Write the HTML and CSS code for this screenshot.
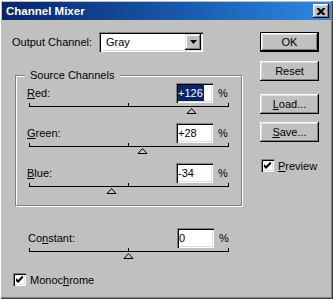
FILE: index.html
```
<!DOCTYPE html>
<html lang="en">
<head>
    <meta charset="UTF-8">
    <title>Channel Mixer</title>
    <link rel="stylesheet" href="styles.css">
</head>
<body>

    <div class="window">

        <!-- Title bar -->
        <div class="titlebar">
            <span class="title">Channel Mixer</span>
            <span class="close-btn">
                <svg width="8" height="7" viewBox="0 0 8 7">
                    <path d="M0 0h2l2 2 2-2h2v1l-2.5 2.5L8 6v1H6L4 5 2 7H0V6l2.5-2.5L0 1z" fill="#000"/>
                </svg>
            </span>
        </div>

        <div class="dialog">

            <!-- Left column -->
            <div class="left-col">
                <div class="output-row">
                    <span class="output-label">Output Channel:</span>
                    <div class="select">
                        <span class="select-value">Gray</span>
                        <span class="select-arrow">
                            <svg width="7" height="4" viewBox="0 0 7 4"><path d="M0 0h7L3.5 4z" fill="#000"/></svg>
                        </span>
                    </div>
                </div>

                <div class="group">
                    <div class="group-legend">Source Channels</div>

                    <div class="channel">
                        <div class="channel-head">
                            <span class="channel-label"><u>R</u>ed:</span>
                            <div class="field"><span class="selected">+126</span></div>
                            <span class="pct">%</span>
                        </div>
                        <svg class="slider" width="201" height="20" viewBox="0 0 201 20">
                            <rect x="0" y="3" width="200" height="1" fill="#000"/>
                            <rect x="0" y="0" width="1" height="4" fill="#000"/>
                            <rect x="99" y="0" width="1" height="4" fill="#000"/>
                            <rect x="199" y="0" width="1" height="4" fill="#000"/>
                            <polygon points="162.5,5.5 158,10.5 167,10.5" fill="#c0c0c0" stroke="#000"/>
                        </svg>
                    </div>

                    <div class="channel">
                        <div class="channel-head">
                            <span class="channel-label"><u>G</u>reen:</span>
                            <div class="field">+28</div>
                            <span class="pct">%</span>
                        </div>
                        <svg class="slider" width="201" height="20" viewBox="0 0 201 20">
                            <rect x="0" y="3" width="200" height="1" fill="#000"/>
                            <rect x="0" y="0" width="1" height="4" fill="#000"/>
                            <rect x="99" y="0" width="1" height="4" fill="#000"/>
                            <rect x="199" y="0" width="1" height="4" fill="#000"/>
                            <polygon points="113.5,5.5 109,10.5 118,10.5" fill="#c0c0c0" stroke="#000"/>
                        </svg>
                    </div>

                    <div class="channel">
                        <div class="channel-head">
                            <span class="channel-label"><u>B</u>lue:</span>
                            <div class="field">-34</div>
                            <span class="pct">%</span>
                        </div>
                        <svg class="slider" width="201" height="20" viewBox="0 0 201 20">
                            <rect x="0" y="3" width="200" height="1" fill="#000"/>
                            <rect x="0" y="0" width="1" height="4" fill="#000"/>
                            <rect x="99" y="0" width="1" height="4" fill="#000"/>
                            <rect x="199" y="0" width="1" height="4" fill="#000"/>
                            <polygon points="82.5,5.5 78,10.5 87,10.5" fill="#c0c0c0" stroke="#000"/>
                        </svg>
                    </div>
                </div>

                <div class="channel constant">
                    <div class="channel-head">
                        <span class="channel-label">Co<u>n</u>stant:</span>
                        <div class="field">0</div>
                        <span class="pct">%</span>
                    </div>
                    <svg class="slider" width="201" height="20" viewBox="0 0 201 20">
                        <rect x="0" y="3" width="200" height="1" fill="#000"/>
                        <rect x="0" y="0" width="1" height="4" fill="#000"/>
                        <rect x="99" y="0" width="1" height="4" fill="#000"/>
                        <rect x="199" y="0" width="1" height="4" fill="#000"/>
                        <polygon points="99.5,5.5 95,10.5 104,10.5" fill="#c0c0c0" stroke="#000"/>
                    </svg>
                </div>

                <label class="check-row mono">
                    <span class="checkbox">
                        <svg width="7" height="7" viewBox="0 0 7 7"><path d="M0 2l2 2 5-5v3L2 7 0 5z" fill="#000"/></svg>
                    </span>
                    <span>Monoc<u>h</u>rome</span>
                </label>
            </div>

            <!-- Buttons -->
            <div class="right-col">
                <button class="btn btn-default">OK</button>
                <button class="btn btn-reset">Reset</button>
                <button class="btn btn-load"><u>L</u>oad...</button>
                <button class="btn btn-save"><u>S</u>ave...</button>
                <label class="check-row preview">
                    <span class="checkbox">
                        <svg width="7" height="7" viewBox="0 0 7 7"><path d="M0 2l2 2 5-5v3L2 7 0 5z" fill="#000"/></svg>
                    </span>
                    <span><u>P</u>review</span>
                </label>
            </div>
        </div>
    </div>

</body>
</html>
```

FILE: styles.css
```
body {
    margin: 0;
    padding: 0;
    background-color: #c0c0c0;
    font-family: 'Liberation Sans', Arial, sans-serif;
    font-size: 11px;
    color: #000;
}

.window {
    width: 333px;
    height: 299px;
    box-sizing: border-box;
    padding: 2px 2px 0 2px;
    background-color: #c0c0c0;
    box-shadow: inset 1px 1px #fff, inset -1px -1px #404040, inset -2px -2px #808080;
}

/* Title bar */
.titlebar {
    height: 18px;
    display: flex;
    align-items: center;
    justify-content: space-between;
    padding: 0 2px 0 4px;
    background: linear-gradient(to right, #0a246a, #1a5fb4 60%, #2f8ae0);
}

.title {
    color: #fff;
    font-weight: bold;
    font-size: 11.5px;
}

.close-btn {
    width: 16px;
    height: 14px;
    display: flex;
    align-items: center;
    justify-content: center;
    background-color: #c0c0c0;
    box-shadow: inset -1px -1px #000, inset 1px 1px #fff, inset -2px -2px #808080, inset 2px 2px #dfdfdf;
}

/* Dialog body */
.dialog {
    display: flex;
    padding: 12px 0 0 10px;
}

.left-col {
    width: 231px;
}

.output-row {
    display: flex;
    align-items: center;
    height: 20px;
}

.output-label {
    width: 87px;
}

.select {
    width: 104px;
    height: 20px;
    box-sizing: border-box;
    padding: 2px;
    display: flex;
    align-items: center;
    background-color: #fff;
    box-shadow: inset 1px 1px #808080, inset 2px 2px #000, inset -1px -1px #fff, inset -2px -2px #dfdfdf;
}

.select-value {
    flex: 1;
    padding-left: 5px;
}

.select-arrow {
    width: 16px;
    height: 16px;
    display: flex;
    align-items: center;
    justify-content: center;
    background-color: #c0c0c0;
    box-shadow: inset -1px -1px #000, inset 1px 1px #dfdfdf, inset -2px -2px #808080, inset 2px 2px #fff;
}

/* Group box */
.group {
    margin: 23px 0 0 3px;
    width: 227px;
    box-sizing: border-box;
    border: 1px solid #808080;
    box-shadow: inset 1px 1px #fff, 1px 1px #fff;
    padding: 0 0 2px 0;
}

.group-legend {
    display: table;
    margin: -7px 0 1px 9px;
    padding: 0 6px 0 5px;
    line-height: 13px;
    background-color: #c0c0c0;
}

.channel {
    padding-left: 11px;
}

.channel.constant {
    padding-left: 0;
    margin: 22px 0 0 16px;
}

.channel-head {
    width: 202px;
    height: 20px;
    display: flex;
    align-items: center;
}

.channel-label {
    flex: 1;
}

.field {
    width: 37px;
    height: 20px;
    box-sizing: border-box;
    padding: 2px;
    line-height: 16px;
    background-color: #fff;
    box-shadow: inset 1px 1px #808080, inset 2px 2px #000, inset -1px -1px #fff, inset -2px -2px #dfdfdf;
}

.selected {
    display: inline-block;
    padding-right: 1px;
    background-color: #0a246a;
    color: #fff;
}

.pct {
    width: 11px;
    margin-left: 5px;
}

.slider {
    display: block;
    margin-left: 2px;
}

.constant .slider {
    margin-left: 1px;
}

/* Checkboxes */
.check-row {
    display: flex;
    align-items: center;
    gap: 4px;
}

.checkbox {
    width: 13px;
    height: 13px;
    display: flex;
    align-items: center;
    justify-content: center;
    background-color: #fff;
    box-shadow: inset 1px 1px #808080, inset 2px 2px #000, inset -1px -1px #fff, inset -2px -2px #dfdfdf;
}

.mono {
    margin: 5px 0 0 1px;
}

/* Buttons */
.right-col {
    margin-left: 17px;
    display: flex;
    flex-direction: column;
    align-items: flex-start;
}

.btn {
    width: 59px;
    height: 20px;
    padding: 0;
    border: none;
    font-family: 'Liberation Sans', Arial, sans-serif;
    font-size: 11px;
    color: #000;
    background-color: #c0c0c0;
    box-shadow: inset -1px -1px #000, inset 1px 1px #fff, inset -2px -2px #808080, inset 2px 2px #dfdfdf;
}

.btn-default {
    border: 1px solid #000;
}

.btn-reset {
    margin-top: 9px;
}

.btn-load {
    margin-top: 13px;
}

.btn-save {
    margin-top: 8px;
}

.preview {
    margin: 17px 0 0 1px;
}
```
